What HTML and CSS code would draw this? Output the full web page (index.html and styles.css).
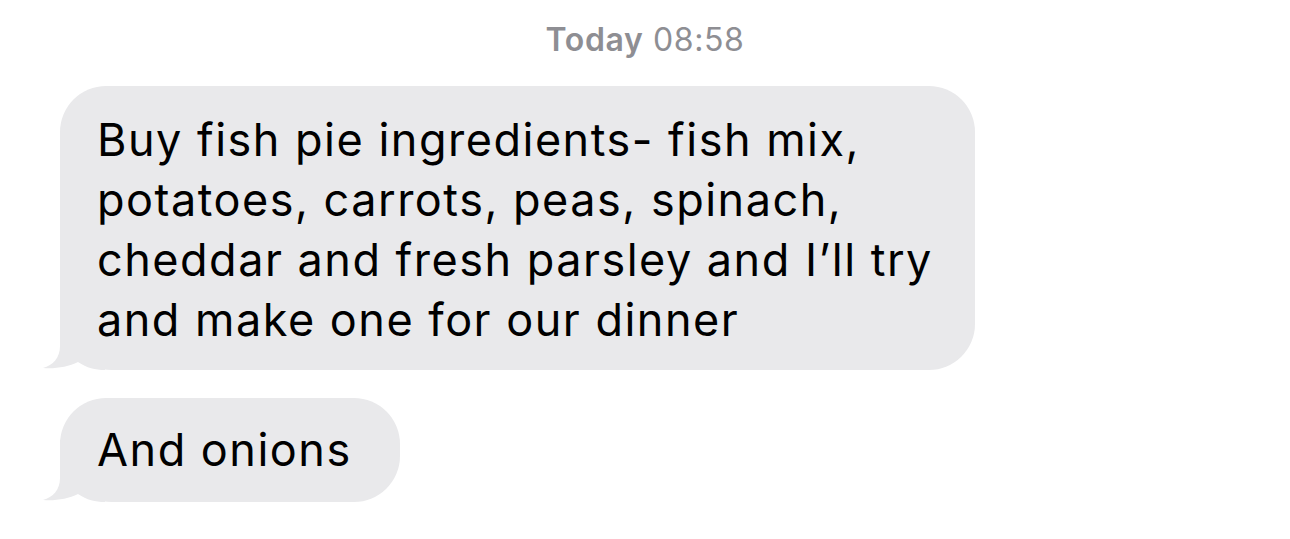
FILE: index.html
```html
<!DOCTYPE html>
<html lang="en">
  <head>
    <meta charset="UTF-8" />
    <meta name="viewport" content="width=device-width, initial-scale=1.0" />
    <title>Messages</title>
    <link rel="stylesheet" href="styles.css">
  </head>
  <body>
    <div class="thread">
      <div class="timestamp"><b>Today</b> 08:58</div>

      <div class="bubble bubble-long">
        <svg class="tail" viewBox="0 0 62 62" width="62" height="62">
          <path d="M17,0 L17,38 C17,50 10,57 0,60 C12,61 25,59 35,54 C44,60 52,62 62,62 L62,0 Z" />
        </svg>
        <span class="bubble-text">
          Buy fish pie ingredients- fish mix,<br>
          potatoes, carrots, peas, spinach,<br>
          cheddar and fresh parsley and I’ll try<br>
          and make one for our dinner
        </span>
      </div>

      <div class="bubble bubble-short">
        <svg class="tail" viewBox="0 0 62 62" width="62" height="62">
          <path d="M17,0 L17,38 C17,50 10,57 0,60 C12,61 25,59 35,54 C44,60 52,62 62,62 L62,0 Z" />
        </svg>
        <span class="bubble-text">And onions</span>
      </div>
    </div>
  </body>
</html>
```

FILE: styles.css
```css
body {
  background-color: #fff;
  color: #000;
  font-family: Inter, "Noto Sans", sans-serif;
  margin: 0;
}

.thread {
  display: flex;
  flex-direction: column;
  align-items: flex-start;
  padding: 20px 0 0 60px;
}

.timestamp {
  align-self: stretch;
  margin-left: -60px;
  text-align: center;
  color: #8e8e93;
  font-size: 32px;
  line-height: 40px;
  letter-spacing: 0.6px;
  margin-bottom: 26px;
}

.timestamp b {
  font-weight: 600;
}

.bubble {
  position: relative;
  background-color: #e9e9eb;
  border-radius: 46px;
  border-bottom-left-radius: 52px;
  font-size: 45px;
  line-height: 60px;
  letter-spacing: 1.5px;
  box-sizing: border-box;
}

.bubble-text {
  position: relative;
}

.bubble-long {
  width: 915px;
  padding: 24px 20px 20px 37px;
}

.bubble-short {
  width: 340px;
  margin-top: 28px;
  padding: 22px 20px 22px 37px;
}

.tail {
  position: absolute;
  left: -17px;
  bottom: 0;
  fill: #e9e9eb;
}
```
